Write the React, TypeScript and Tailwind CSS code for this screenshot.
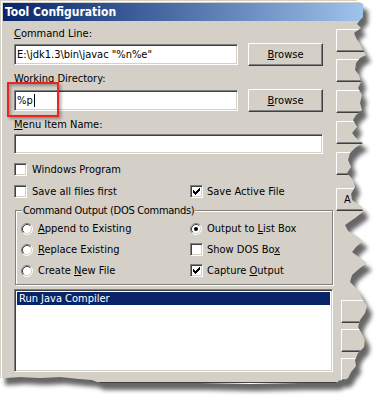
import React from "react";

const PTS =
  "0,0 356,0 363,4 363,17 360,20 357,24 361,28 354,33 356,38 360,44 363,50 366,55 360,58 356,63 355,70 359,75 361,82 358,88 362,95 360,103 362,110 356,115 353,120 357,127 352,133 356,138 363,143 355,148 350,153 348,160 351,167 347,173 353,180 355,187 351,194 352,200 362,207 363,212 355,218 345,225 348,231 357,236 363,241 356,247 352,252 360,258 367,263 360,268 352,275 350,282 356,288 360,294 363,300 367,306 365,313 360,320 358,327 362,334 365,340 364,347 358,353 355,360 356,366 351,372 348,378 343,381 340,380 336,383 300,383 250,384 200,383 150,383 100,383 92,380 80,379 60,377 40,378 20,377 5,378 0,378";

const sunken =
  "border border-t-[#808080] border-l-[#808080] border-b-white border-r-white shadow-[inset_1px_1px_0_#404040,inset_-1px_-1px_0_#d4d0c8] bg-white";
const raised =
  "border border-t-white border-l-white border-b-[#404040] border-r-[#404040] shadow-[inset_-1px_-1px_0_#808080,inset_1px_1px_0_#d4d0c8] bg-[#d4d0c8]";

function Check({ checked }: { checked?: boolean }) {
  return (
    <div className={`${sunken} relative h-[13px] w-[13px] shrink-0`}>
      {checked && (
        <svg
          width="7"
          height="7"
          viewBox="0 0 7 7"
          shapeRendering="crispEdges"
          className="absolute left-[2px] top-[2px]"
        >
          <path
            d="M6 0h1v1h-1z M5 1h2v1h-2z M0 2h1v1h-1z M4 2h3v1h-3z M0 3h2v1h-2z M3 3h3v1h-3z M0 4h5v1h-5z M1 5h3v1h-3z M2 6h1v1h-1z"
            fill="#000"
          />
        </svg>
      )}
    </div>
  );
}

function Radio({ checked }: { checked?: boolean }) {
  return (
    <svg width="12" height="12" viewBox="0 0 12 12" className="shrink-0">
      <circle cx="6" cy="6" r="5" fill="#fff" />
      <path d="M2.11 9.89 A5.5 5.5 0 0 1 9.89 2.11" stroke="#808080" strokeWidth="1" fill="none" />
      <path d="M9.89 2.11 A5.5 5.5 0 0 1 2.11 9.89" stroke="#fff" strokeWidth="1" fill="none" />
      <path d="M2.82 9.18 A4.5 4.5 0 0 1 9.18 2.82" stroke="#404040" strokeWidth="1" fill="none" />
      <path d="M9.18 2.82 A4.5 4.5 0 0 1 2.82 9.18" stroke="#d4d0c8" strokeWidth="1" fill="none" />
      {checked && <circle cx="6" cy="6" r="2" fill="#000" />}
    </svg>
  );
}

function Browse() {
  return (
    <div className={`${raised} ml-[10px] flex h-[23px] w-[75px] items-center justify-center`}>
      <span>
        <u>B</u>rowse
      </span>
    </div>
  );
}

export default function App() {
  return (
    <div className="relative h-[405px] w-[377px] overflow-hidden bg-white font-['DejaVu_Sans_Condensed','Liberation_Sans',sans-serif] text-[11px] leading-[13px] text-black">
      <div className="flex h-[383px] w-[377px] flex-col border-b border-[#404040] bg-[#d4d0c8] pl-[3px] pt-[3px] shadow-[inset_1px_1px_0_#d4d0c8,inset_2px_2px_0_#fff]">
        {/* Title bar */}
        <div className="flex h-[18px] items-center bg-linear-to-r from-[#0a246a] to-[#a6caf0] pl-[2px] text-[12px] font-bold text-white">
          Tool Configuration
        </div>

        <div className="flex">
          {/* Left column */}
          <div className="ml-[11px] flex w-[319px] flex-col">
            <div className="mt-[6px]">
              <u>C</u>ommand Line:
            </div>
            <div className="mt-[3px] flex h-[23px] items-center">
              <div className={`${sunken} flex h-[21px] w-[224px] items-center pl-[2px]`}>
                E:\jdk1.3\bin\javac "%n%e"
              </div>
              <Browse />
            </div>

            <div className="mt-[6px]">
              <u>W</u>orking Directory:
            </div>
            <div className="mt-[4px] flex h-[23px] items-center">
              <div className={`${sunken} flex h-[21px] w-[224px] items-center pl-[2px]`}>
                %p<span className="ml-px h-[13px] border-l border-black" />
              </div>
              <Browse />
            </div>

            <div className="mt-[6px]">
              <u>M</u>enu Item Name:
            </div>
            <div className={`${sunken} mt-[3px] h-[20px] w-[309px]`} />

            <div className="mt-[9px] flex h-[13px] items-center">
              <Check />
              <span className="ml-[5px]">Windows Program</span>
            </div>
            <div className="mt-[9px] flex h-[13px] items-center">
              <div className="flex w-[176px] items-center">
                <Check />
                <span className="ml-[5px]">Save all files first</span>
              </div>
              <div className="flex items-center">
                <Check checked />
                <span className="ml-[4px]">Save Active File</span>
              </div>
            </div>

            {/* Group box */}
            <div className="relative ml-[1px] mt-[12px] flex h-[75px] w-[318px] border border-[#808080] pl-[5px] pt-[11px] shadow-[1px_1px_0_#fff,inset_1px_1px_0_#fff]">
              <span className="absolute -top-[7px] left-[6px] bg-[#d4d0c8] px-[1px] tracking-[-0.3px]">
                Command Output (DOS Commands)
              </span>
              <div className="flex w-[169px] flex-col gap-[8px]">
                <div className="flex h-[13px] items-center">
                  <Radio />
                  <span className="ml-[5px]">
                    <u>A</u>ppend to Existing
                  </span>
                </div>
                <div className="flex h-[13px] items-center">
                  <Radio />
                  <span className="ml-[5px]">
                    <u>R</u>eplace Existing
                  </span>
                </div>
                <div className="flex h-[13px] items-center">
                  <Radio />
                  <span className="ml-[5px]">
                    Create <u>N</u>ew File
                  </span>
                </div>
              </div>
              <div className="flex flex-col gap-[8px]">
                <div className="flex h-[13px] items-center">
                  <Radio checked />
                  <span className="ml-[5px]">
                    Output to <u>L</u>ist Box
                  </span>
                </div>
                <div className="flex h-[13px] items-center">
                  <Check />
                  <span className="ml-[4px]">
                    Show DOS Bo<u>x</u>
                  </span>
                </div>
                <div className="flex h-[13px] items-center">
                  <Check checked />
                  <span className="ml-[4px]">
                    Capture <u>O</u>utput
                  </span>
                </div>
              </div>
            </div>

            {/* List box */}
            <div className={`${sunken} mt-[4px] h-[83px] w-[319px] p-[2px]`}>
              <div className="flex h-[13px] items-center bg-[#0a246a] pl-[2px] text-white">
                Run Java Compiler
              </div>
            </div>
          </div>

          {/* Right column of buttons (torn off) */}
          <div className="ml-[3px] flex flex-col">
            <div className={`${raised} mt-[8px] h-[23px] w-[75px]`} />
            <div className={`${raised} mt-[7px] flex h-[23px] w-[75px] items-center pl-[20px]`}>C</div>
            <div className={`${raised} mt-[8px] h-[23px] w-[75px]`} />
            <div className={`${raised} mt-[8px] h-[23px] w-[75px]`} />
            <div className={`${raised} mt-[8px] h-[23px] w-[75px]`} />
            <div className={`${raised} mt-[13px] flex h-[23px] w-[75px] items-center pl-[7px]`}>A</div>
            <div className={`${raised} ml-[5px] mt-[89px] h-[23px] w-[75px]`} />
            <div className={`${raised} ml-[5px] mt-[6px] flex h-[23px] w-[75px] items-center pl-[22px]`}>L</div>
            <div className={`${raised} ml-[5px] mt-[6px] h-[23px] w-[75px]`} />
          </div>
        </div>
      </div>

      {/* Red highlight */}
      <div className="absolute left-[7px] top-[82px] h-[35px] w-[52px] border-2 border-[#ea2424] shadow-[2px_2px_3px_rgba(0,0,0,0.35),inset_2px_2px_3px_rgba(0,0,0,0.3)]" />

      {/* Torn paper edge */}
      <svg className="pointer-events-none absolute left-0 top-0" width="377" height="405">
        <defs>
          <clipPath id="outside">
            <path clipRule="evenodd" d={`M0 0H377V405H0Z M${PTS}Z`} />
          </clipPath>
          <filter id="blur" x="-10%" y="-10%" width="130%" height="130%">
            <feGaussianBlur stdDeviation="2.2" />
          </filter>
        </defs>
        <g clipPath="url(#outside)">
          <rect width="377" height="405" fill="#fff" />
          <polygon points={PTS} transform="translate(5,7)" fill="#000" opacity="0.6" filter="url(#blur)" />
        </g>
      </svg>
    </div>
  );
}
